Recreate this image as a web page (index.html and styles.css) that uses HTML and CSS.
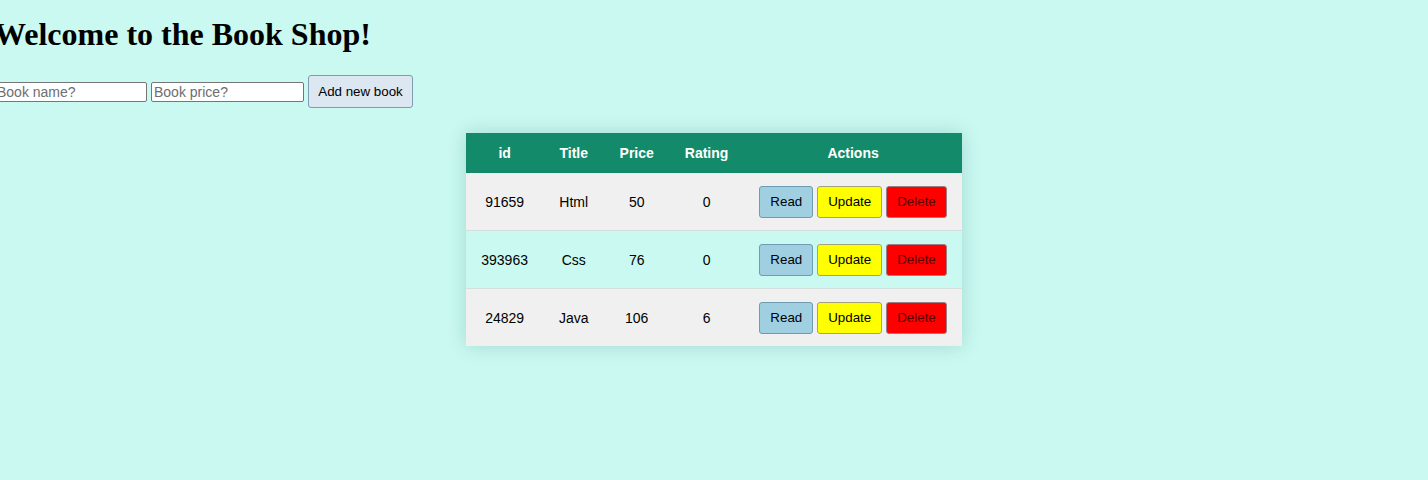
FILE: index.html
```html
<!DOCTYPE html>
<html lang="en">
<head>
<meta charset="utf-8">
<title>Book Shop</title>
<link rel="stylesheet" href="styles.css">
</head>
<body>
<div class="app">
  <h1 class="title">Welcome to the Book Shop!</h1>
  <form class="add-form">
    <input class="field" type="text" placeholder="Book name?">
    <input class="field" type="text" placeholder="Book price?">
    <button class="add-btn" type="button">Add new book</button>
  </form>
  <table class="books">
    <thead>
      <tr><th>id</th><th>Title</th><th>Price</th><th>Rating</th><th>Actions</th></tr>
    </thead>
    <tbody>
      <tr>
        <td>91659</td><td>Html</td><td>50</td><td>0</td>
        <td class="actions"><button class="btn read">Read</button><button class="btn update">Update</button><button class="btn delete">Delete</button></td>
      </tr>
      <tr>
        <td>393963</td><td>Css</td><td>76</td><td>0</td>
        <td class="actions"><button class="btn read">Read</button><button class="btn update">Update</button><button class="btn delete">Delete</button></td>
      </tr>
      <tr>
        <td>24829</td><td>Java</td><td>106</td><td>6</td>
        <td class="actions"><button class="btn read">Read</button><button class="btn update">Update</button><button class="btn delete">Delete</button></td>
      </tr>
    </tbody>
  </table>
</div>
</body>
</html>
```

FILE: styles.css
```css
html, body {
  margin: 0;
  padding: 0;
  background: #c9f9f1;
}

body {
  min-height: 480px;
}

.app {
  margin-left: -6px;
  padding-top: 1px;
}

.title {
  font-family: "Liberation Serif", "Times New Roman", serif;
  font-size: 32px;
  font-weight: bold;
  margin: 15px 0 0 0;
  line-height: 37px;
  color: #000;
}

.add-form {
  display: flex;
  align-items: center;
  gap: 4px;
  margin-top: 22px;
}

.field {
  box-sizing: border-box;
  width: 153px;
  height: 20px;
  padding: 1px 2px;
  border: 1px solid #767676;
  border-radius: 2px;
  background: #fff;
  font-family: "Liberation Sans", Arial, sans-serif;
  font-size: 14px;
  color: #000;
  margin: 0;
}

.field::placeholder {
  color: #6e6e6e;
}

.add-btn {
  box-sizing: border-box;
  width: 105px;
  height: 33px;
  padding: 0 8px;
  border: 1px solid #7e9cb2;
  border-radius: 3px;
  background: #dce7f1;
  font-family: "Liberation Sans", Arial, sans-serif;
  font-size: 13.33px;
  color: #000;
  margin: 0;
}

.books {
  margin: 25px auto 0;
  border-collapse: collapse;
  font-family: "Liberation Sans", Arial, sans-serif;
  font-size: 14px;
  color: #000;
  box-shadow: 0 0 18px rgba(0, 80, 70, 0.18);
  position: relative;
  left: 3px;
}

.books th {
  background: #138a69;
  color: #fff;
  font-weight: bold;
  height: 40px;
  padding: 0 15.5px;
  text-align: center;
}

.books td {
  height: 57px;
  padding: 0 15.5px;
  text-align: center;
}

.books tbody tr {
  background: #f0f0f0;
  border-bottom: 1px solid #d4dedd;
}

.books tbody tr:nth-child(2) {
  background: #c9f9f1;
}

.books tbody tr:last-child {
  border-bottom: none;
}

.books td.actions {
  white-space: nowrap;
}

.btn {
  box-sizing: border-box;
  height: 32px;
  padding: 0 10px;
  border: 1px solid #7f8f99;
  border-radius: 3px;
  font-family: "Liberation Sans", Arial, sans-serif;
  font-size: 13.33px;
  color: #000;
  margin: 0 0 0 4px;
  vertical-align: middle;
}

.btn:first-child {
  margin-left: 0;
}

.btn.read {
  background: #9fcfe0;
  border-color: #6e9cb0;
}

.btn.update {
  background: #ffff00;
  border-color: #a3a37a;
}

.btn.delete {
  background: #ff0000;
  border-color: #9a7f86;
  color: #5a0000;
}
```
